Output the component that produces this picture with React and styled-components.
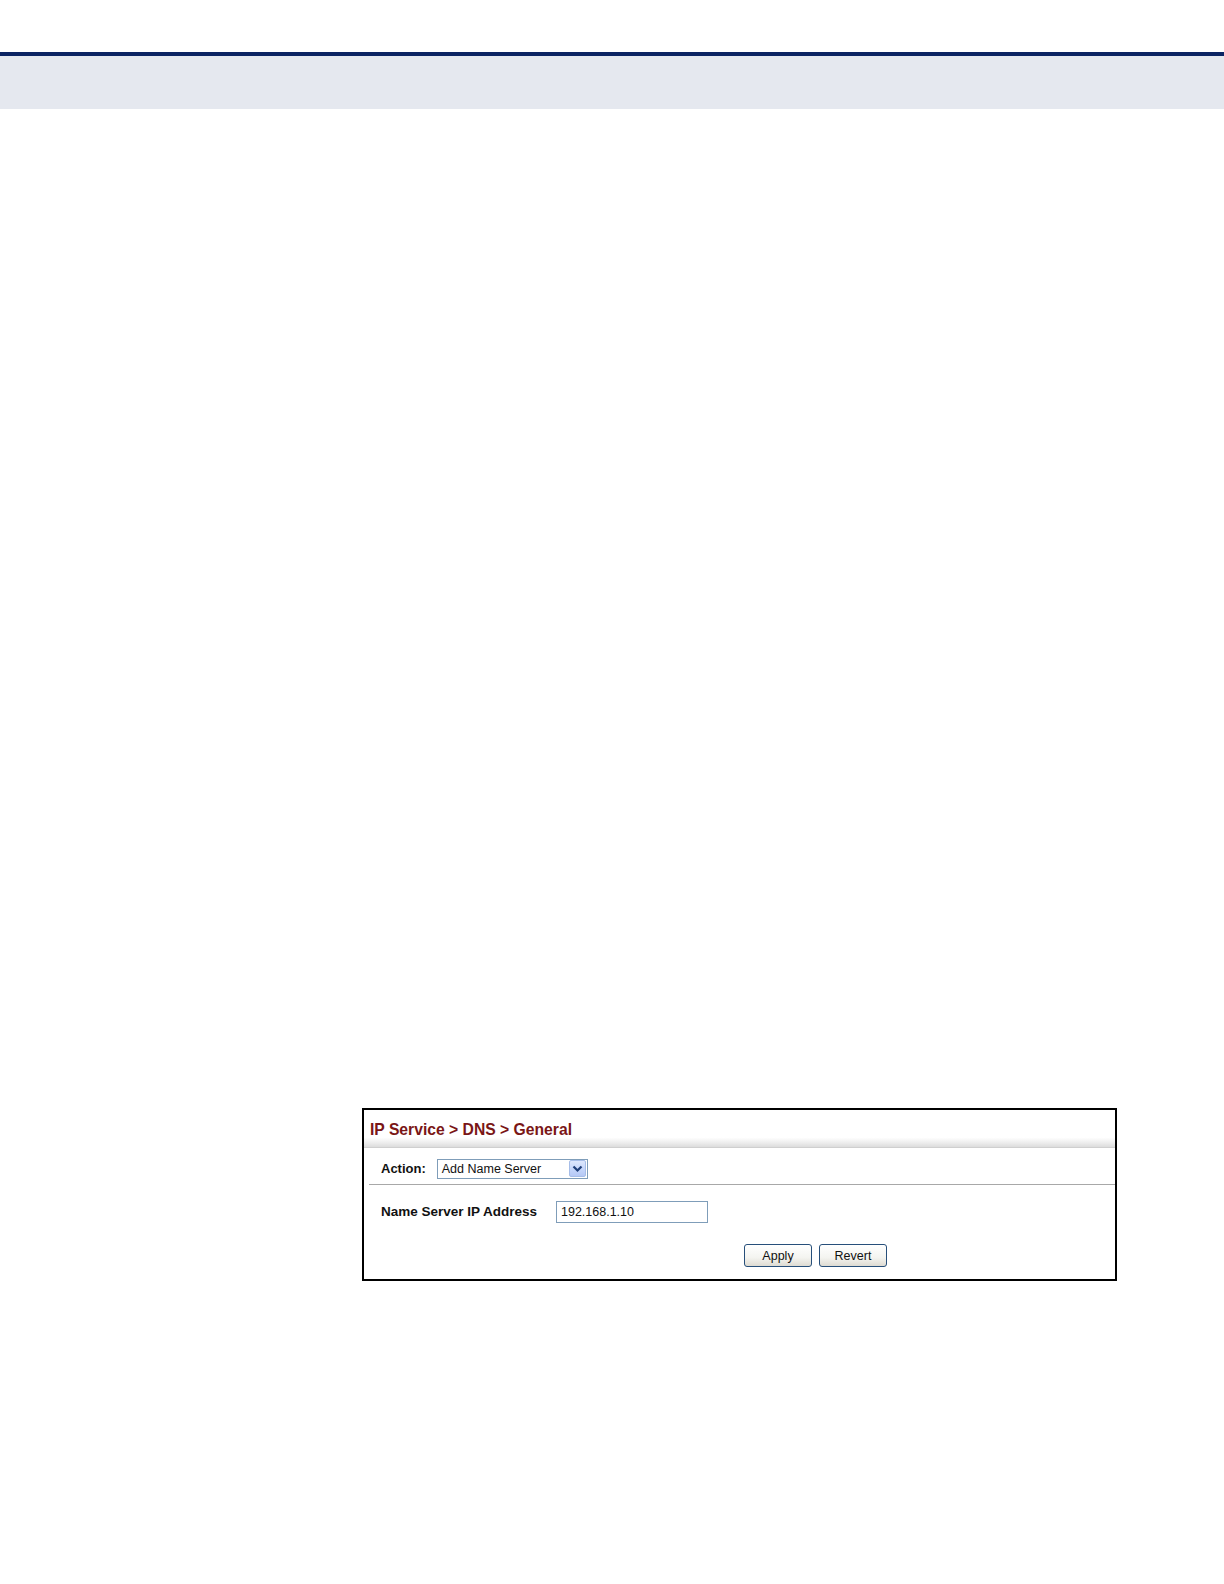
import React from 'react';
import styled, { createGlobalStyle } from 'styled-components';

const GlobalStyle = createGlobalStyle`
  body {
    margin: 0;
    background: #ffffff;
    font-family: "Liberation Sans", Arial, sans-serif;
  }
`;

const Page = styled.div`
  width: 1224px;
  height: 1584px;
  background: #ffffff;
  overflow: hidden;
`;

const TopRule = styled.div`
  margin-top: 52px;
  height: 4px;
  background: #0b2463;
`;

const HeaderBand = styled.div`
  height: 53px;
  background: #e5e8ef;
`;

const Content = styled.div`
  padding: 999px 0 0 362px;
`;

const Panel = styled.div`
  width: 751px;
  height: 169px;
  border: 2px solid #000;
  background: #fff;
  display: flex;
  flex-direction: column;
`;

const TitleBar = styled.div`
  height: 38px;
  padding: 3px 6px 0;
  box-sizing: border-box;
  display: flex;
  align-items: center;
  font-size: 15.7px;
  font-weight: bold;
  color: #7a1616;
  background: linear-gradient(to bottom, #ffffff 0%, #ffffff 74%, #ececec 89%, #dcdcdc 100%);
  border-bottom: 1px solid #cfcfcf;
`;

const ActionRow = styled.div`
  height: 37px;
  margin-left: 5px;
  padding: 5px 0 0 12px;
  box-sizing: border-box;
  display: flex;
  align-items: center;
  gap: 11px;
  border-bottom: 1px solid #a8a8a8;
`;

const Label = styled.span`
  font-size: ${p => p.$size || '13px'};
  font-weight: bold;
  color: #111;
  width: ${p => p.$width || 'auto'};
`;

const Select = styled.div`
  width: 145px;
  height: 18px;
  border: 1px solid #7f9db9;
  display: flex;
  align-items: center;
  justify-content: space-between;
  padding-left: 4px;
  box-sizing: content-box;
  font-size: 12.5px;
  color: #111;
`;

const ArrowBox = styled.div`
  width: 15px;
  height: 15px;
  margin-right: 1px;
  border: 1px solid #a6bde8;
  border-radius: 2px;
  background: linear-gradient(to bottom, #dde7fd 0%, #c3d4fa 60%, #b5c8f5 100%);
  display: flex;
  align-items: center;
  justify-content: center;
`;

const FieldRow = styled.div`
  height: 53px;
  padding-left: 17px;
  display: flex;
  align-items: center;
`;

const TextInput = styled.div`
  width: 146px;
  height: 20px;
  margin-left: 1px;
  border: 1px solid #7f9db9;
  padding-left: 4px;
  display: flex;
  align-items: center;
  font-size: 12.5px;
  color: #111;
`;

const ButtonRow = styled.div`
  margin-top: 6px;
  padding-left: 380px;
  display: flex;
  gap: 7px;
`;

const Button = styled.div`
  width: 66px;
  height: 21px;
  border: 1px solid #274f7a;
  border-radius: 3px;
  background: linear-gradient(to bottom, #ffffff 0%, #f4f4f0 60%, #dedbd2 100%);
  display: flex;
  align-items: center;
  justify-content: center;
  font-size: 12.5px;
  color: #111;
`;

const Chevron = () => (
  <svg width="11" height="8" viewBox="0 0 11 8">
    <path d="M1.5 1.5 L5.5 5.5 L9.5 1.5" fill="none" stroke="#1f3f7a" strokeWidth="2.2" />
  </svg>
);

export default function App() {
  return (
    <Page>
      <GlobalStyle />
      <TopRule />
      <HeaderBand />
      <Content>
        <Panel>
          <TitleBar>IP Service &gt; DNS &gt; General</TitleBar>
          <ActionRow>
            <Label>Action:</Label>
            <Select>
              <span>Add Name Server</span>
              <ArrowBox>
                <Chevron />
              </ArrowBox>
            </Select>
          </ActionRow>
          <FieldRow>
            <Label $size="13.5px" $width="174px">Name Server IP Address</Label>
            <TextInput>192.168.1.10</TextInput>
          </FieldRow>
          <ButtonRow>
            <Button>Apply</Button>
            <Button>Revert</Button>
          </ButtonRow>
        </Panel>
      </Content>
    </Page>
  );
}
